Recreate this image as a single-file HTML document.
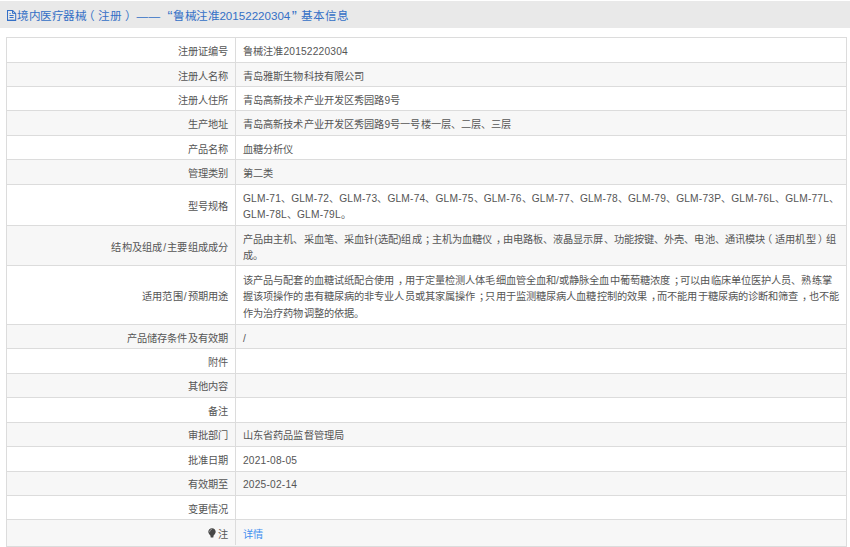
<!DOCTYPE html>
<html lang="zh-CN"><head><meta charset="utf-8">
<style>
html,body{margin:0;padding:0;background:#fff;width:850px;height:547px;overflow:hidden;}
body{font-family:"Liberation Sans",sans-serif;position:relative;}
.wrap{position:absolute;left:0;top:0;width:850px;height:547px;}
.hd{position:absolute;left:0;top:1px;width:850px;height:27px;background:#e9e9e9;}
.t{position:absolute;top:8.0px;font-size:11.6px;line-height:16px;color:#3470c6;white-space:nowrap;}
.ico{position:absolute;left:7px;top:10px;}
.row{position:absolute;left:6px;width:841px;}
.g{background:#f7f7f7;}
.hl{position:absolute;left:6px;width:841px;height:1px;background:#dcdcdc;}
.vl{position:absolute;width:1px;background:#dcdcdc;}
.lb{position:absolute;right:621.5px;font-size:10.2px;line-height:16.4px;letter-spacing:0.2px;color:#555;white-space:nowrap;text-align:right;}
.vt{position:absolute;left:243px;font-size:10.2px;line-height:16.4px;letter-spacing:0.1px;color:#555;white-space:nowrap;}
.l{letter-spacing:0.2px;}
.pc{position:relative;left:3.5px;}
.po{position:relative;left:-3.5px;}
.pq{position:relative;left:2px;}
.q{font-size:15px;}
.sl{padding-left:0.9px;letter-spacing:1.1px;}
a{color:#3f8ff0;text-decoration:none;}
</style></head><body><div class="wrap">
<div class="hd"></div>
<svg class="ico" width="10" height="12" viewBox="0 0 10 12"><path d="M0.5 0.5H5.6L8.7 3.6V10.5H0.5Z" fill="none" stroke="#3570c8" stroke-width="1.05"/><path d="M0.5 10.3H8.7" stroke="#3570c8" stroke-width="1.3"/><path d="M5.5 0.5V3.4H8.7" fill="none" stroke="#3570c8" stroke-width="1"/><path d="M2.5 3.5H3.6M2.5 5.5H6.6M2.5 7.5H6.6" stroke="#3570c8" stroke-width="1"/></svg>

<div class="t" style="left:17px;letter-spacing:-0.5px">境内医疗器械</div>
<div class="t" style="left:82.8px;letter-spacing:0px">（</div>
<div class="t" style="left:98.4px;letter-spacing:0px">注册</div>
<div class="t" style="left:125.0px;letter-spacing:0px">）</div>
<div class="t" style="left:136.5px;letter-spacing:0px"><span style="letter-spacing:0.5px">——</span></div>
<div class="t" style="left:167.5px;letter-spacing:0px"><span class=q>“</span></div>
<div class="t" style="left:173.0px;letter-spacing:-0.5px">鲁械注准</div>
<div class="t" style="left:219.4px;letter-spacing:0px">20152220304</div>
<div class="t" style="left:291.8px;letter-spacing:0px"><span class=q>”</span></div>
<div class="t" style="left:301.0px;letter-spacing:0px">基本信息</div>
<div class="row" style="top:37.7px;height:24.5px"></div>
<div class="row g" style="top:62.2px;height:24.3px"></div>
<div class="row" style="top:86.5px;height:24.4px"></div>
<div class="row g" style="top:110.9px;height:24.4px"></div>
<div class="row" style="top:135.3px;height:24.4px"></div>
<div class="row g" style="top:159.7px;height:24.5px"></div>
<div class="row" style="top:184.2px;height:41.2px"></div>
<div class="row g" style="top:225.4px;height:40.4px"></div>
<div class="row" style="top:265.8px;height:58.6px"></div>
<div class="row g" style="top:324.4px;height:24.2px"></div>
<div class="row" style="top:348.6px;height:24.4px"></div>
<div class="row g" style="top:373.0px;height:24.4px"></div>
<div class="row" style="top:397.4px;height:24.6px"></div>
<div class="row g" style="top:422.0px;height:24.5px"></div>
<div class="row" style="top:446.5px;height:24.5px"></div>
<div class="row g" style="top:471.0px;height:24.3px"></div>
<div class="row" style="top:495.3px;height:24.6px"></div>
<div class="row g" style="top:519.9px;height:26.1px"></div>
<div class="hl" style="top:37.2px"></div>
<div class="hl" style="top:61.7px"></div>
<div class="hl" style="top:86.0px"></div>
<div class="hl" style="top:110.4px"></div>
<div class="hl" style="top:134.8px"></div>
<div class="hl" style="top:159.2px"></div>
<div class="hl" style="top:183.7px"></div>
<div class="hl" style="top:224.9px"></div>
<div class="hl" style="top:265.3px"></div>
<div class="hl" style="top:323.9px"></div>
<div class="hl" style="top:348.1px"></div>
<div class="hl" style="top:372.5px"></div>
<div class="hl" style="top:396.9px"></div>
<div class="hl" style="top:421.5px"></div>
<div class="hl" style="top:446.0px"></div>
<div class="hl" style="top:470.5px"></div>
<div class="hl" style="top:494.8px"></div>
<div class="hl" style="top:519.4px"></div>
<div class="hl" style="top:545.5px"></div>
<div class="vl" style="left:6px;top:37.2px;height:509.3px"></div>
<div class="vl" style="left:846px;top:37.2px;height:509.3px"></div>
<div class="vl" style="left:235px;top:37.2px;height:508.3px"></div>
<div class="lb" style="top:44.1px">注册证编号</div>
<div class="vt" style="top:44.1px">鲁械注准<span class="l">20152220304</span></div>
<div class="lb" style="top:68.6px">注册人名称</div>
<div class="vt" style="top:68.6px">青岛雅斯生物科技有限公司</div>
<div class="lb" style="top:92.9px">注册人住所</div>
<div class="vt" style="top:92.9px">青岛高新技术产业开发区秀园路<span class="l">9</span>号</div>
<div class="lb" style="top:117.3px">生产地址</div>
<div class="vt" style="top:117.3px">青岛高新技术产业开发区秀园路<span class="l">9</span>号一号楼一层、二层、三层</div>
<div class="lb" style="top:141.7px">产品名称</div>
<div class="vt" style="top:141.7px">血糖分析仪</div>
<div class="lb" style="top:166.2px">管理类别</div>
<div class="vt" style="top:166.2px">第二类</div>
<div class="lb" style="top:199.0px">型号规格</div>
<div class="vt" style="top:190.8px"><span class="l">GLM-71</span>、<span class="l">GLM-72</span>、<span class="l">GLM-73</span>、<span class="l">GLM-74</span>、<span class="l">GLM-75</span>、<span class="l">GLM-76</span>、<span class="l">GLM-77</span>、<span class="l">GLM-78</span>、<span class="l">GLM-79</span>、<span class="l">GLM-73P</span>、<span class="l">GLM-76L</span>、<span class="l">GLM-77L</span>、<br><span class="l">GLM-78L</span>、<span class="l">GLM-79L</span>。</div>
<div class="lb" style="top:239.8px">结构及组成<span class=sl>/</span>主要组成成分</div>
<div class="vt" style="top:231.6px">产品由主机、采血笔、采血针(选配)组成<span class="pc">；</span>主机为血糖仪<span class="pc">，</span>由电路板、液晶显示屏、功能按键、外壳、电池、通讯模块<span class="po">（</span>适用机型<span class="pq">）</span>组<br>成。</div>
<div class="lb" style="top:289.3px">适用范围<span class=sl>/</span>预期用途</div>
<div class="vt" style="top:272.9px">该产品与配套的血糖试纸配合使用<span class="pc">，</span>用于定量检测人体毛细血管全血和/或静脉全血中葡萄糖浓度<span class="pc">；</span>可以由临床单位医护人员、熟练掌<br>握该项操作的患有糖尿病的非专业人员或其家属操作<span class="pc">；</span>只用于监测糖尿病人血糖控制的效果<span class="pc">，</span>而不能用于糖尿病的诊断和筛查<span class="pc">，</span>也不能<br>作为治疗药物调整的依据。</div>
<div class="lb" style="top:330.7px">产品储存条件及有效期</div>
<div class="vt" style="top:330.7px">/</div>
<div class="lb" style="top:355.0px">附件</div>
<div class="lb" style="top:379.4px">其他内容</div>
<div class="lb" style="top:403.9px">备注</div>
<div class="lb" style="top:428.4px">审批部门</div>
<div class="vt" style="top:428.4px">山东省药品监督管理局</div>
<div class="lb" style="top:452.9px">批准日期</div>
<div class="vt" style="top:452.9px"><span class="l">2021-08-05</span></div>
<div class="lb" style="top:477.3px">有效期至</div>
<div class="vt" style="top:477.3px"><span class="l">2025-02-14</span></div>
<div class="lb" style="top:501.8px">变更情况</div>
<svg style="position:absolute;left:208.3px;top:528.2px" width="8" height="10" viewBox="0 0 8 10"><path d="M4 0.2C1.9 0.2 0.3 1.8 0.3 3.8C0.3 5.4 1.4 6.3 2.4 7.6L2.7 9.6H5.3L5.6 7.6C6.6 6.3 7.7 5.4 7.7 3.8C7.7 1.8 6.1 0.2 4 0.2Z" fill="#474747"/><path d="M1.6 4.2C1.6 2.7 2.5 1.6 3.8 1.4" fill="none" stroke="#a9a9a9" stroke-width="0.9"/></svg><div class="lb" style="top:526.6px">注</div>
<div class="vt" style="top:527.1px"><a>详情</a></div>
</div></body></html>
